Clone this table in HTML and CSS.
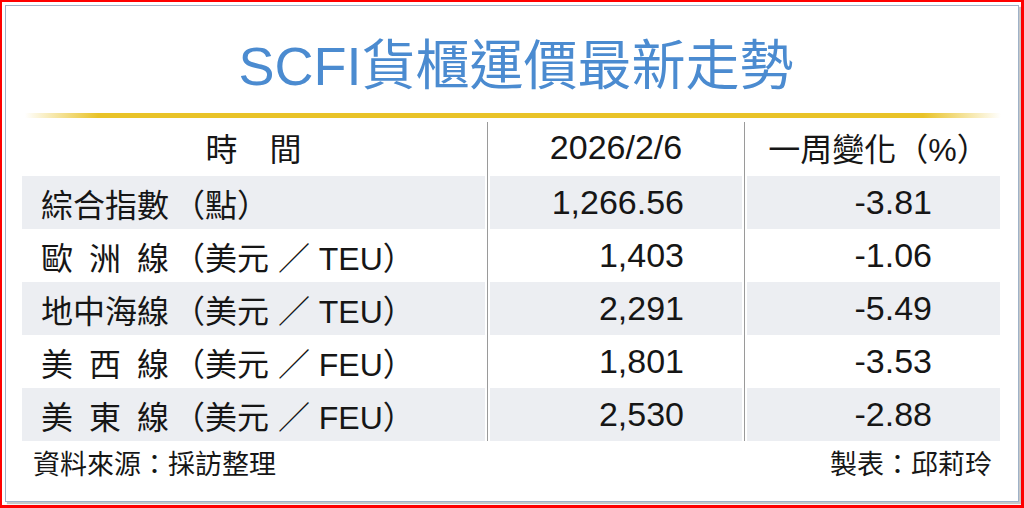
FILE: index.html
```html
<!DOCTYPE html>
<html lang="zh-Hant">
<head>
<meta charset="utf-8">
<title>SCFI貨櫃運價最新走勢</title>
<link rel="stylesheet" href="styles.css">
</head>
<body>
<div class="outer">
  <div class="frame">
    <h1 class="title">SCFI貨櫃運價最新走勢</h1>
    <div class="rule"></div>
    <div class="table">
      <div class="row head">
        <div class="cell c1">時　間</div>
        <div class="cell c2">2026/2/6</div>
        <div class="cell c3">一周變化（%）</div>
      </div>
      <div class="row alt">
        <div class="cell c1"><span class="name">綜合指數</span><span class="unit">（點）</span></div>
        <div class="cell c2">1,266.56</div>
        <div class="cell c3">-3.81</div>
      </div>
      <div class="row">
        <div class="cell c1"><span class="name">歐 洲 線</span><span class="unit">（美元 ／ TEU）</span></div>
        <div class="cell c2">1,403</div>
        <div class="cell c3">-1.06</div>
      </div>
      <div class="row alt">
        <div class="cell c1"><span class="name">地中海線</span><span class="unit">（美元 ／ TEU）</span></div>
        <div class="cell c2">2,291</div>
        <div class="cell c3">-5.49</div>
      </div>
      <div class="row">
        <div class="cell c1"><span class="name">美 西 線</span><span class="unit">（美元 ／ FEU）</span></div>
        <div class="cell c2">1,801</div>
        <div class="cell c3">-3.53</div>
      </div>
      <div class="row alt">
        <div class="cell c1"><span class="name">美 東 線</span><span class="unit">（美元 ／ FEU）</span></div>
        <div class="cell c2">2,530</div>
        <div class="cell c3">-2.88</div>
      </div>
    </div>
    <div class="footer">
      <span>資料來源：採訪整理</span>
      <span>製表：邱莉玲</span>
    </div>
  </div>
</div>
</body>
</html>
```
FILE: styles.css
```css
* {
  box-sizing: border-box;
  margin: 0;
  padding: 0;
}

body {
  width: 1024px;
  height: 508px;
  background: #fff;
  color: #161616;
  font-family: "Liberation Sans", "Noto Sans CJK TC", sans-serif;
}

.outer {
  width: 1024px;
  height: 508px;
  border: solid #f00;
  border-width: 2px 3px 3px 2px;
  padding: 3px 2px 3px 3px;
}

.frame {
  height: 100%;
  border: 1px solid #9fb2c8;
  box-shadow: 2px 2px 1px rgba(0, 0, 0, 0.22);
  display: flex;
  flex-direction: column;
}

.title {
  height: 107px;
  padding: 28px 0 0 8px;
  font-size: 54px;
  line-height: 64px;
  font-weight: normal;
  text-align: center;
  color: #4b8bd0;
}

.rule {
  height: 5px;
  margin: 0 17px 0 19px;
  background: linear-gradient(to right,
    rgba(233, 195, 40, 0) 0%,
    #e9c328 7.5%,
    #e9c328 92%,
    rgba(233, 195, 40, 0) 100%);
}

.table {
  padding: 0 18px 0 16px;
}

.row {
  display: grid;
  grid-template-columns: 463px 252px 253px;
  column-gap: 5px;
  height: 53px;
}

.row.head {
  height: 58px;
}

.cell {
  display: flex;
  align-items: center;
  position: relative;
  font-size: 32px;
  white-space: nowrap;
}

.alt .cell {
  background: #eceef2;
}

.c1 {
  padding-left: 19px;
}

.c2,
.c3 {
  justify-content: flex-end;
  font-size: 34px;
}

.c2 {
  padding-right: 58px;
}

.c3 {
  padding-right: 68px;
}

.c2::before,
.c3::before {
  content: "";
  position: absolute;
  left: -3px;
  top: 0;
  bottom: 0;
  width: 1px;
  background: #9a9a9a;
}

.head .c2::before,
.head .c3::before {
  top: 4px;
}

.head .cell {
  justify-content: center;
  padding: 0;
}

.head .c3 {
  font-size: 32px;
  padding-left: 10px;
}

.name {
  display: inline-block;
  width: 4em;
  text-align: justify;
  text-align-last: justify;
}

.unit {
  padding-left: 4px;
}

.footer {
  display: flex;
  justify-content: space-between;
  padding: 9px 26px 0 27px;
  font-size: 27px;
  line-height: 30px;
}
```
